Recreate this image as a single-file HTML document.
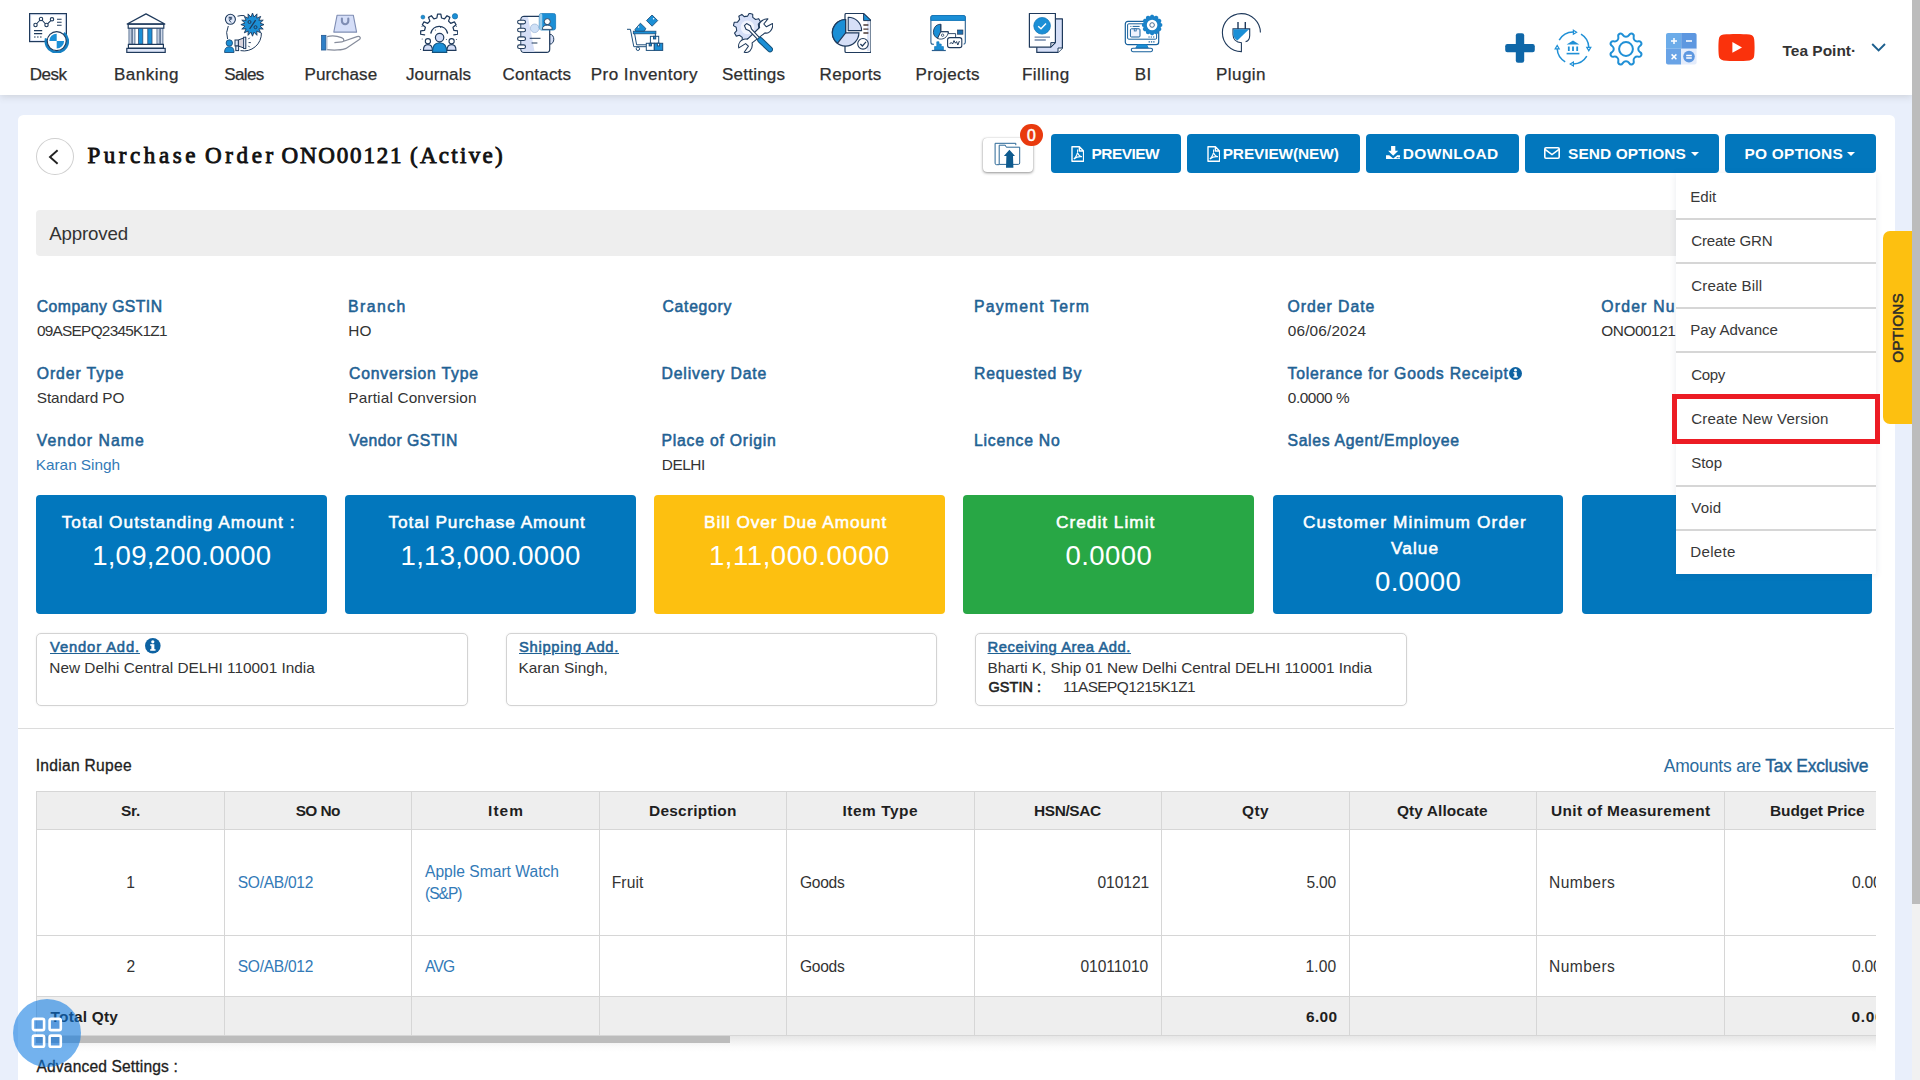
<!DOCTYPE html>
<html>
<head>
<meta charset="utf-8">
<title>Purchase Order ONO00121</title>
<style>
*{box-sizing:border-box;margin:0;padding:0}
html,body{width:1920px;height:1080px;overflow:hidden}
body{background:#e9effb;font-family:"Liberation Sans",sans-serif;color:#333;position:relative}
#root{position:absolute;left:0;top:0;width:1920px;height:1080px;overflow:hidden;background:#e9effb}
.abs{position:absolute}
.t{position:absolute;white-space:nowrap}
#nav{position:absolute;left:0;top:0;width:1912px;height:95px;background:#fff;box-shadow:0 2px 7px rgba(75,75,70,.17)}
.ni{position:absolute;top:13px;width:40px;height:40px}
</style>
</head>
<body>
<div id="root">
<div id="nav">

<svg class="ni" style="left:29px" viewBox="0 0 40 40">
<rect x=".6" y=".6" width="36.8" height="28" fill="#e1e9fa" stroke="#1f3a5c" stroke-width="1.2"/>
<rect x="2.2" y="2.2" width="33.6" height="24.8" fill="#fff"/>
<path d="M6.5 12 L12 6 L17.5 12 L23 6.3" fill="none" stroke="#1f3a5c" stroke-width="1.1"/>
<g fill="#fff" stroke="#1f3a5c" stroke-width="1.1"><circle cx="6.5" cy="12" r="1.7"/><circle cx="12" cy="6" r="1.7"/><circle cx="17.5" cy="12" r="1.7"/><circle cx="23" cy="6.3" r="1.7"/></g>
<path d="M28 6.2 H32.6 M28 9.2 H32.6 M28 12.2 H32.6 M5 17.6 H13.2 M5 20.6 H13.2" stroke="#1f3a5c" stroke-width="1.1"/>
<path d="M5 24 H13.2" stroke="#1f3a5c" stroke-width="1.1" stroke-dasharray="1.6 1.4"/>
<path d="M34.81 19.95 A10.9 10.9 0 1 1 17.27 25.48" fill="none" stroke="#1580c2" stroke-width="2.8"/>
<circle cx="27.7" cy="28.1" r="9.5" fill="#fff" stroke="#1f3a5c" stroke-width="1.1"/>
<path d="M27.7 28.1 V20.7 A7.4 7.4 0 0 0 20.3 28.1 Z M27.7 28.1 V35.5 A7.4 7.4 0 0 0 35.1 28.1 Z" fill="#1b8fd6"/>
</svg>
<svg class="ni" style="left:125.9px" viewBox="0 0 40 40">
<path d="M20 .9 L1.2 11 H38.8 Z" fill="#fff" stroke="#1f3a5c" stroke-width="1.3" stroke-linejoin="round"/>
<rect x="2.2" y="11.3" width="35.6" height="3.9" fill="#fff" stroke="#1f3a5c" stroke-width="1.2"/>
<g stroke="#2c4a72" stroke-width=".8"><rect x="3" y="15.5" width="2.2" height="15.7" fill="#e4ebfa"/><rect x="6.7" y="15.5" width="2.2" height="15.7" fill="#e4ebfa"/>
<rect x="12.6" y="15.5" width="4.2" height="15.7" fill="#1b8fd6"/><rect x="21.8" y="15.5" width="4.2" height="15.7" fill="#1b8fd6"/>
<rect x="31" y="15.5" width="2.2" height="15.7" fill="#e4ebfa"/><rect x="34.7" y="15.5" width="2.2" height="15.7" fill="#e4ebfa"/></g>
<rect x="2.4" y="31.4" width="35" height="3.8" fill="#fff" stroke="#1f3a5c" stroke-width="1.2"/>
<rect x=".8" y="35.4" width="38.4" height="4" fill="#dfe7f9" stroke="#1f3a5c" stroke-width="1.2"/>
</svg>
<svg class="ni" style="left:224px" viewBox="0 0 40 40">
<path d="M13.5 3.2 A17.5 17.5 0 0 1 20.5 2.6" fill="none" stroke="#1f3a5c" stroke-width="1"/>
<path d="M4.3 13 A17.5 17.5 0 0 0 3.6 26" fill="none" stroke="#1f3a5c" stroke-width="1"/>
<path d="M16.5 37.6 A17.5 17.5 0 0 0 37.4 19.8" fill="none" stroke="#1f3a5c" stroke-width="1"/>
<circle cx="6.4" cy="6.3" r="5" fill="#e1e9fa" stroke="#1f3a5c" stroke-width="1.1"/>
<path d="M4.6 4.3 H8.2 M4.6 5.9 H8.2 M5.4 4.3 C7.6 4.3 7.6 7.3 5 7.3 L7.4 9.6" fill="none" stroke="#1f3a5c" stroke-width=".9"/>
<polygon points="28.50,0.00 30.00,4.05 32.94,0.88 32.78,5.20 36.70,3.40 34.90,7.32 39.22,7.16 36.05,10.10 40.10,11.60 36.05,13.10 39.22,16.04 34.90,15.88 36.70,19.80 32.78,18.00 32.94,22.32 30.00,19.15 28.50,23.20 27.00,19.15 24.06,22.32 24.22,18.00 20.30,19.80 22.10,15.88 17.78,16.04 20.95,13.10 16.90,11.60 20.95,10.10 17.78,7.16 22.10,7.32 20.30,3.40 24.22,5.20 24.06,0.88 27.00,4.05" fill="#1b8fd6" stroke="#1f3a5c" stroke-width=".9" stroke-linejoin="round"/>
<path d="M31.6 7.2 L25.6 16" stroke="#1f3a5c" stroke-width="1.3"/><circle cx="25.5" cy="9" r="1.5" fill="none" stroke="#1f3a5c" stroke-width="1"/><circle cx="31.5" cy="14.2" r="1.5" fill="none" stroke="#1f3a5c" stroke-width="1"/>
<circle cx="5.3" cy="30" r="3.2" fill="#1b8fd6" stroke="#1f4f7c" stroke-width=".9"/>
<path d="M.6 39.5 C.6 35 2.5 33.8 5.3 33.8 C8.2 33.8 10 35 10 39.5 Z" fill="#1b8fd6" stroke="#1f4f7c" stroke-width=".9"/>
<rect x="11" y="27" width="3.4" height="6" fill="#e1e9fa" stroke="#1f3a5c" stroke-width="1"/>
<path d="M14.4 27 L21.6 24.2 V35.6 L14.4 33 Z" fill="#d9d3dc" stroke="#1f3a5c" stroke-width="1"/>
<rect x="19.6" y="24.2" width="2.2" height="11.4" fill="#e1e9fa" stroke="#1f3a5c" stroke-width=".9"/>
<rect x="11.8" y="33" width="2.8" height="4.6" fill="#e1e9fa" stroke="#1f3a5c" stroke-width="1"/>
<path d="M24.4 26.2 L25.6 24.8 M24.6 29.6 H26.8 M24.4 32.8 L25.6 34.2" stroke="#1f3a5c" stroke-width="1"/>
</svg>
<svg class="ni" style="left:321px" viewBox="0 0 40 40">
<path d="M16.1 2.2 H32.3 L35.6 19.1 H12.8 Z" fill="#d5def8" stroke="#7f8db3" stroke-width="1.1" stroke-linejoin="round"/>
<path d="M20.9 5.6 V8 A3.2 3.2 0 0 0 27.3 8 V5.6" fill="none" stroke="#7f8db3" stroke-width="2.1" stroke-linecap="round"/>
<rect x=".3" y="22.4" width="4.6" height="14.6" fill="#2f7fc6" stroke="#2a5f98" stroke-width=".9"/>
<path d="M6 23.6 C10 22.6 16 22.8 20.5 24.6 C23.6 25.8 23.4 28.6 21 28.8 L13.4 29.6 M20.5 29 L36 23.6 C39 22.6 40.4 25.2 38 26.8 L25 35.4 C22 37.2 12 37.4 6 36.6" fill="none" stroke="#878d9c" stroke-width="1.25"/>
<path d="M6 23.4 V36.8" stroke="#b8c0d0" stroke-width="1"/>
</svg>
<svg class="ni" style="left:418px" viewBox="0 0 40 40">
<path d="M6.58 21.92 L2.67 21.25 L2.67 17.95 L6.58 17.28 L7.38 14.30 L4.33 11.77 L5.98 8.90 L9.70 10.29 L11.89 8.10 L10.50 4.38 L13.37 2.73 L15.90 5.78 L18.88 4.98 L19.55 1.07 L22.85 1.07 L23.52 4.98 L26.50 5.78 L29.03 2.73 L31.90 4.38 L30.51 8.10 L32.70 10.29 L36.42 8.90 L38.07 11.77 L35.02 14.30 L35.82 17.28 L39.73 17.95 L39.73 21.25 L35.82 21.92" fill="none" stroke="#1f3a5c" stroke-width="1.25" stroke-linejoin="round" stroke-linecap="round"/>
<path d="M12.9 20 A8.5 8.5 0 0 1 29.5 20" fill="none" stroke="#1f3a5c" stroke-width="1.4" stroke-linecap="round"/>
<circle cx="4.9" cy="4.1" r="1.9" fill="#1b8fd6" stroke="#156fa8" stroke-width=".7"/><circle cx="37" cy="3.3" r="2.7" fill="#1b8fd6" stroke="#156fa8" stroke-width=".7"/>
<g fill="#1f3a5c"><circle cx="22.6" cy="14.6" r=".5"/><circle cx="17.4" cy="17" r=".5"/><circle cx="4.2" cy="26" r=".5"/><circle cx="38.4" cy="26.4" r=".5"/><circle cx="2.6" cy="36.6" r=".5"/><circle cx="4" cy="13.4" r=".5"/><circle cx="38.4" cy="13.2" r=".5"/><circle cx="28.4" cy="26.4" r=".5"/></g>
<circle cx="9.9" cy="28.2" r="2.6" fill="#fff" stroke="#1f3a5c" stroke-width="1.1"/>
<path d="M5.4 37.4 C5.4 33.4 7 31.6 9.9 31.6 C12.8 31.6 14.4 33.4 14.4 37.4 Z" fill="#d6dff7" stroke="#1f3a5c" stroke-width="1.1"/>
<circle cx="33.6" cy="28.2" r="2.6" fill="#fff" stroke="#1f3a5c" stroke-width="1.1"/>
<path d="M29 37.4 C29 33.4 30.6 31.6 33.6 31.6 C36.6 31.6 38 33.4 38 37.4 Z" fill="#d6dff7" stroke="#1f3a5c" stroke-width="1.1"/>
<path d="M14.4 39.4 C14.4 32.6 16.4 29.8 21.6 29.8 C26.8 29.8 28.8 32.6 28.8 39.4 Z" fill="#1b8fd6" stroke="#14527c" stroke-width="1.1"/>
<circle cx="21.6" cy="24.6" r="4.2" fill="#d6dff7" stroke="#1f3a5c" stroke-width="1.2"/>
</svg>
<svg class="ni" style="left:516.5px" viewBox="0 0 40 40">
<path d="M32.6 21.2 C38.2 21.2 38.2 31.2 32.6 31.2 Z" fill="#d6dff7" stroke="#1f3a5c" stroke-width="1"/>
<rect x="3.9" y="3.3" width="28.8" height="36.1" rx="3.2" fill="#fff" stroke="#1f3a5c" stroke-width="1.2"/>
<path d="M4.6 6 C4.6 4.6 5.6 3.9 7 3.9 H11 L17.6 38.8 H7 C5.6 38.8 4.6 38 4.6 36.6 Z" fill="#d6dff7"/>
<g fill="#fff" stroke="#1f3a5c" stroke-width="1.1"><rect x=".6" y="7.3" width="7.9" height="3.6" rx="1.8"/><rect x=".6" y="15.2" width="7.9" height="3.6" rx="1.8"/><rect x=".6" y="23.9" width="7.9" height="3.6" rx="1.8"/><rect x=".6" y="31.9" width="7.9" height="3.6" rx="1.8"/></g>
<circle cx="17.7" cy="15.3" r="4.3" fill="#cfe0f6" stroke="#8fa9cf" stroke-width=".6"/>
<path d="M12.7 25.3 H23.5 M14.6 30 H20.4" stroke="#1f3a5c" stroke-width="1"/>
<rect x="22.3" y=".4" width="16.3" height="16.6" rx="2.2" fill="#1b8fd6" stroke="#1678ba" stroke-width=".8"/>
<rect x="22.3" y=".4" width="3" height="16.6" rx="1.5" fill="#fff" opacity=".55"/>
<circle cx="30.3" cy="8.6" r="3" fill="#fff" stroke="#1f3a5c" stroke-width=".9"/>
<path d="M25.4 16.4 C25.4 13.2 27.6 12.2 30.3 12.2 C33 12.2 35.2 13.2 35.2 16.4 Z" fill="#fff" stroke="#1f3a5c" stroke-width=".8"/>
</svg>
<svg class="ni" style="left:625px" viewBox="0 0 40 40">
<path d="M2 16.3 H5.4 L8.8 33.7 H21" fill="none" stroke="#1d4f7c" stroke-width="1"/>
<path d="M9.6 20.6 L11.6 31.8 H21" fill="none" stroke="#1d4f7c" stroke-width="1"/>
<rect x="8.3" y="18.2" width="22.6" height="2.6" fill="#1b8fd6" stroke="#1d4f7c" stroke-width=".8"/>
<path d="M30.4 20.8 V23.2" stroke="#1d4f7c" stroke-width="1"/>
<circle cx="12.9" cy="35.8" r="1.7" fill="#fff" stroke="#1d4f7c" stroke-width="1"/>
<polygon points="27.1,2 32.7,7.6 27.1,13.2 21.5,7.6" fill="#1b8fd6" stroke="#1d4f7c" stroke-width=".9"/><circle cx="28.6" cy="5.8" r=".8" fill="#fff"/>
<polygon points="10,16.4 15.4,10.2 20.8,15.4 19.4,18.2 10.6,18.2" fill="#1b8fd6" stroke="#1d4f7c" stroke-width=".9"/><circle cx="13.6" cy="14" r=".8" fill="#fff"/>
<g stroke="#1d4f7c" stroke-width="1"><rect x="25.4" y="23.3" width="8.3" height="7" fill="#fff"/><rect x="21.3" y="30.3" width="8" height="7.1" fill="#fff"/><rect x="29.3" y="30.3" width="8.4" height="7.1" fill="#1b8fd6"/>
<rect x="28.5" y="23.3" width="2.2" height="2.6" fill="#1b8fd6"/><rect x="24.2" y="30.3" width="2.2" height="2.6" fill="#1b8fd6"/><rect x="32.4" y="30.3" width="2.2" height="2.6" fill="#fff"/></g>
</svg>
<svg class="ni" style="left:733px" viewBox="0 0 40 40">
<path d="M14.66 3.10 L16.26 0.31 L19.71 1.19 L19.77 4.41 L22.60 6.53 L25.71 5.68 L27.52 8.74 L25.30 11.06 L25.80 14.56 L28.59 16.16 L27.71 19.61 L24.49 19.67 L22.37 22.50 L23.22 25.61 L20.16 27.42 L17.84 25.20 L14.34 25.70 L12.74 28.49 L9.29 27.61 L9.23 24.39 L6.40 22.27 L3.29 23.12 L1.48 20.06 L3.70 17.74 L3.20 14.24 L0.41 12.64 L1.29 9.19 L4.51 9.13 L6.63 6.30 L5.78 3.19 L8.84 1.38 L11.16 3.60 Z" fill="#d6dff7" stroke="#1f3a5c" stroke-width="1.1" stroke-linejoin="round"/>
<circle cx="14.5" cy="14.4" r="6.8" fill="#f1f4fd"/>
<path d="M34.9 5.8 L30.8 11 L33.4 13.8 L39.6 10.6 C40.2 14 38.5 18 35.7 19.5 C34.5 20.1 33 20.2 32 19.9 L19.1 29.9 C19.6 33 19 36 17 37.8 C15.4 39.2 13 39.8 11.2 39.3 L15.4 33.2 L12.6 30.6 L5.8 34.9 C5 32 6.5 28.6 9.1 27 C11 26 13 25.8 14.5 26.2 L26.6 14.5 C26 12 26.4 10.6 27 9.7 C28.4 7.6 31 6 34.9 5.800 Z" fill="#fff" stroke="#1f3a5c" stroke-width="1.1" stroke-linejoin="round"/>
<path d="M11.4 12.6 L13.6 10.6 L17.4 12.8 L18.6 16.2 L27.6 25.8 L25.8 27.600 L16.4 17.8 L13 16.2 Z" fill="#fff" stroke="#1f3a5c" stroke-width="1.1" stroke-linejoin="round"/>
<path d="M27.2 27 L37 36.4" stroke="#14527c" stroke-width="6" stroke-linecap="round"/>
<path d="M27.2 27 L37 36.4" stroke="#1b8fd6" stroke-width="3.9" stroke-linecap="round"/>
</svg>
<svg class="ni" style="left:830.5px" viewBox="0 0 40 40">
<path d="M15.4 .5 H32.6 L40 7.6 V38.2 C40 39 39.4 39.5 38.6 39.5 H15.4 C14.6 39.5 14 39 14 38.2 V1.8 C14 1 14.6 .5 15.4 .5 Z" fill="#fff" stroke="#1f3a5c" stroke-width="1.2"/>
<path d="M37.4 8 V38" stroke="#dbe3f7" stroke-width="2.6"/>
<path d="M32.6 .5 L40 7.6 H32.6 Z" fill="#1b8fd6" stroke="#1f3a5c" stroke-width="1"/>
<path d="M14.6 6.5 A13.3 13.3 0 1 0 27.9 19.8 H14.6 Z" fill="#d6dff7" stroke="#1f3a5c" stroke-width="1.2"/>
<path d="M14.6 6.500 A13.3 13.3 0 0 0 6.41 30.28 L14.6 19.8 Z" fill="#1b8fd6" stroke="#1f3a5c" stroke-width="1.2" stroke-linejoin="round"/>
<path d="M17.2 17.6 V4.2 A13.4 13.4 0 0 1 30.6 17.6 Z" fill="#d6dff7" stroke="#1f3a5c" stroke-width="1.1" stroke-linejoin="round"/>
<path d="M32.4 12 H37.4 M32.4 16.1 H37.4 M32.4 20 H37.4" stroke="#4a3a36" stroke-width="1.3"/>
<circle cx="32" cy="30.8" r="5.3" fill="#fff" stroke="#1f3a5c" stroke-width="1.1"/>
<path d="M29.4 31 L31.4 33 L35 28.8" fill="none" stroke="#1f3a5c" stroke-width="1.2"/>
</svg>
<svg class="ni" style="left:928px" viewBox="0 0 40 40">
<path d="M6 31.2 H5 C3.8 31.2 2.9 30.4 2.9 29.2 V4.6 C2.9 3.4 3.8 2.5 5 2.5 H35.2 C36.4 2.5 37.3 3.4 37.3 4.6 V29.2 C37.3 30.4 36.6 31 35.6 31.2" fill="#fff" stroke="#2a5f8f" stroke-width="1.1"/>
<path d="M2.9 7.4 V4.6 C2.9 3.4 3.8 2.5 5 2.5 H35.2 C36.4 2.5 37.3 3.4 37.3 4.6 V7.4 Z" fill="#1b8fd6" stroke="#1678ba" stroke-width="1"/>
<path d="M12.8 11.2 A7.5 7.5 0 0 0 9.6 25.4 L12.8 18.7 Z" fill="#1b8fd6" stroke="#1f3a5c" stroke-width=".9"/>
<path d="M9.6 25.4 A7.5 7.5 0 0 0 20.3 18.7 H12.8 Z" fill="#fff" stroke="#1f3a5c" stroke-width=".9"/>
<path d="M12.8 11.2 V18.7 H20.3 V20.6 H27.6 V24" fill="none" stroke="#1f3a5c" stroke-width=".9"/>
<circle cx="14.6" cy="22.2" r="1.2" fill="none" stroke="#1f3a5c" stroke-width=".8"/>
<rect x="29.5" y="17" width="5.4" height="4.2" fill="#1d6fae" stroke="#1f3a5c" stroke-width=".7"/>
<path d="M6.6 37 V33.6 H8.8 V28.8 H11 V31 H13.2 V33.6 H15.4 V37 Z" fill="#1b8fd6" stroke="#1678ba" stroke-width=".7"/>
<path d="M3.8 37.5 H17.8" stroke="#2a5f8f" stroke-width="1.2"/>
<rect x="19.6" y="24.6" width="14.2" height="10" rx="2.2" fill="#fff" stroke="#1f3a5c" stroke-width="1.1"/>
<path d="M21.6 30.6 L23.4 29.6 L24.6 31 L26 27.6 L27.4 30.2 L28.6 28.6 L29.8 32 L31.4 28" fill="none" stroke="#1f3a5c" stroke-width="1"/>
</svg>
<svg class="ni" style="left:1026px" viewBox="0 0 40 40">
<path d="M10.8 5.8 H36.4 V35 L32 39.4 H10.8 Z" fill="#d6dff7" stroke="#1f3a5c" stroke-width="1.2" stroke-linejoin="round"/>
<path d="M36.4 35 H32 V39.4" fill="#fff" stroke="#1f3a5c" stroke-width="1"/>
<path d="M3.4 .5 H29.4 V29.6 L24.8 34.2 H3.4 Z" fill="#fff" stroke="#1f3a5c" stroke-width="1.2" stroke-linejoin="round"/>
<path d="M29.4 29.6 H24.8 V34.2 Z" fill="#c9d0dc" stroke="#1f3a5c" stroke-width="1" stroke-linejoin="round"/>
<circle cx="16.1" cy="12.8" r="8.3" fill="#1b8fd6" stroke="#1678ba" stroke-width=".8"/>
<path d="M12.2 13.2 L15 15.8 L20 10.4" fill="none" stroke="#fff" stroke-width="1.4"/>
<path d="M8.6 24.1 H24 M8.6 27 H19.8" stroke="#6f87a8" stroke-width="1.3"/>
</svg>
<svg class="ni" style="left:1123px" viewBox="0 0 40 40">
<rect x="2.3" y="8.3" width="33.4" height="23.3" rx="2.6" fill="#fff" stroke="#17609c" stroke-width="1.2"/>
<rect x="4.6" y="10.8" width="29" height="15.4" rx="1.2" fill="#fff" stroke="#17609c" stroke-width="1"/>
<path d="M7.4 13.4 H16.6" stroke="#17609c" stroke-width="1" stroke-dasharray="1 1.2 20"/>
<rect x="7.4" y="15.8" width="9.6" height="8.2" rx="1" fill="#eef2fd" stroke="#17609c" stroke-width="1"/>
<rect x="11.2" y="15.8" width="2" height="2.2" fill="#cfd9f3" stroke="#17609c" stroke-width=".7"/>
<path d="M25.4 24 H31.4 M25.6 28.8 H31.6" stroke="#17609c" stroke-width="1.2" stroke-dasharray="1.3 1"/>
<path d="M14.6 31.6 H23.6 L25.2 35 H12.8 Z" fill="#1b8fd6" stroke="#1678ba" stroke-width=".8"/>
<rect x="8.3" y="35.2" width="21.2" height="3.5" rx="1.6" fill="#fff" stroke="#17609c" stroke-width="1.1"/>
<path d="M27.80 3.80 L28.31 2.63 L29.89 2.63 L30.40 3.80 L32.07 4.25 L33.10 3.49 L34.46 4.28 L34.32 5.55 L35.55 6.78 L36.82 6.64 L37.61 8.00 L36.85 9.03 L37.30 10.70 L38.47 11.21 L38.47 12.79 L37.30 13.30 L36.85 14.97 L37.61 16.00 L36.82 17.36 L35.55 17.22 L34.32 18.45 L34.46 19.72 L33.10 20.51 L32.07 19.75 L30.40 20.20 L29.89 21.37 L28.31 21.37 L27.80 20.20 L26.13 19.75 L25.10 20.51 L23.74 19.72 L23.88 18.45 L22.65 17.22 L21.38 17.36 L20.59 16.00 L21.35 14.97 L20.90 13.30 L19.73 12.79 L19.73 11.21 L20.90 10.70 L21.35 9.03 L20.59 8.00 L21.38 6.64 L22.65 6.78 L23.88 5.55 L23.74 4.28 L25.10 3.49 L26.13 4.25 Z" fill="#1b83c9" stroke="#1b83c9" stroke-width="1.6" stroke-linejoin="round"/>
<circle cx="29.1" cy="12" r="5.3" fill="#fff"/>
<circle cx="29.1" cy="12" r="2.3" fill="#fff" stroke="#3a5f86" stroke-width=".9"/>
</svg>
<svg class="ni" style="left:1221px" viewBox="0 0 40 40">
<path d="M39.4 19.4 A19 19 0 1 0 20.4 38.6 V29.8 C15 29.4 12 26 12 21.6 V15.9 H28.7 V22.4 C28.7 26 27 28 24.6 28.6" fill="none" stroke="#1f3a5c" stroke-width="1.1"/>
<path d="M12.4 16.3 H28 L16.4 27.6 C13.6 26 12.4 24 12.4 21.6 Z" fill="#1b8fd6"/>
<path d="M17 9 V16 M24.3 9 V16" stroke="#1f3a5c" stroke-width="1.4"/>
</svg>
  
<svg class="abs" style="left:1505px;top:33px" width="30" height="30" viewBox="0 0 30 30"><rect x="10.8" y=".2" width="8.4" height="29.6" rx="2.2" fill="#0f67a8"/><rect x=".2" y="11" width="29.6" height="8.2" rx="2.2" fill="#0f67a8"/></svg>
<svg class="abs" style="left:1553.3px;top:28.3px" width="40" height="40" viewBox="0 0 40 40" fill="none" stroke="#2090d6" stroke-width="1.5">
<path d="M6.2 12.2 A16 16 0 0 1 20.4 4"/><path d="M20.4 2.2 L23.6 4.2 L20.4 6.2 Z" fill="#fff" stroke-width="1.2"/>
<path d="M28 6.200 A16 16 0 0 1 35.8 19.4"/><path d="M33.8 19.400 L35.8 22.8 L37.800 19.4 Z" fill="#fff" stroke-width="1.2"/>
<path d="M33.8 28.200 A16 16 0 0 1 20.4 36"/><path d="M20.4 34 L17.2 36 L20.4 38 Z" fill="#fff" stroke-width="1.2"/>
<path d="M12.2 33.8 A16 16 0 0 1 4.2 20.8"/><path d="M2.2 20.800 L4.200 17.4 L6.2 20.8 Z" fill="#fff" stroke-width="1.2"/>
<path d="M20 12.4 L13.6 16.6 H26.4 Z" fill="#2090d6" stroke="none"/>
<path d="M15.800 18.6 V23 M20 18.6 V23 M24.2 18.600 V23" stroke-width="1.8"/>
<rect x="13.6" y="24.8" width="12.8" height="1.6" fill="#2090d6" stroke="none"/>
</svg>
<svg class="abs" style="left:1606px;top:29px" width="40" height="40" viewBox="0 0 40 40" fill="none" stroke="#2090d6" stroke-width="2">
<path d="M20.00 7.75 Q21.94 7.75 23.04 6.15 L23.40 5.63 Q24.51 4.02 26.31 4.77 L26.31 4.77 Q28.11 5.52 27.76 7.44 L27.64 8.06 Q27.29 9.97 28.66 11.34 L28.66 11.34 Q30.03 12.71 31.94 12.36 L32.56 12.24 Q34.48 11.89 35.23 13.69 L35.23 13.69 Q35.98 15.49 34.37 16.60 L33.85 16.96 Q32.25 18.06 32.25 20.00 L32.25 20.00 Q32.25 21.94 33.85 23.04 L34.37 23.40 Q35.98 24.51 35.23 26.31 L35.23 26.31 Q34.48 28.11 32.56 27.76 L31.94 27.64 Q30.03 27.29 28.66 28.66 L28.66 28.66 Q27.29 30.03 27.64 31.94 L27.76 32.56 Q28.11 34.48 26.31 35.23 L26.31 35.23 Q24.51 35.98 23.40 34.37 L23.04 33.85 Q21.94 32.25 20.00 32.25 L20.00 32.25 Q18.06 32.25 16.96 33.85 L16.60 34.37 Q15.49 35.98 13.69 35.23 L13.69 35.23 Q11.89 34.48 12.24 32.56 L12.36 31.94 Q12.71 30.03 11.34 28.66 L11.34 28.66 Q9.97 27.29 8.06 27.64 L7.44 27.76 Q5.52 28.11 4.77 26.31 L4.77 26.31 Q4.02 24.51 5.63 23.40 L6.15 23.04 Q7.75 21.94 7.75 20.00 L7.75 20.00 Q7.75 18.06 6.15 16.96 L5.63 16.60 Q4.02 15.49 4.77 13.69 L4.77 13.69 Q5.52 11.89 7.44 12.24 L8.06 12.36 Q9.97 12.71 11.34 11.34 L11.34 11.34 Q12.71 9.97 12.36 8.06 L12.24 7.44 Q11.89 5.52 13.69 4.77 L13.69 4.77 Q15.49 4.02 16.60 5.63 L16.96 6.15 Q18.06 7.75 20.00 7.75 Z" stroke-linejoin="round"/>
<circle cx="20" cy="20" r="6.9"/>
</svg>
<svg class="abs" style="left:1666px;top:33px" width="31" height="32" viewBox="0 0 31 32">
<path d="M2 0 H15.2 V15.8 H0 V2 C0 .9 .9 0 2 0 Z" fill="#6cace9"/>
<path d="M15.2 0 H28.6 C29.7 0 30.6 .9 30.6 2 V15.8 H15.2 Z" fill="#5d97e0"/>
<path d="M0 15.8 H15.2 V31.6 H2 C.9 31.6 0 30.7 0 29.6 Z" fill="#69a3e6"/>
<path d="M15.2 15.8 H30.6 V29.6 C30.6 30.7 29.7 31.6 28.6 31.6 H15.2 Z" fill="#e4ecfb"/>
<circle cx="23" cy="23.6" r="5.8" fill="#5d97e0"/>
<path d="M5 8 H11 M8 5 V11 M20 8 H26 M5.6 21.4 L10.4 26.2 M10.4 21.4 L5.6 26.2 M20.2 22.4 H25.8 M20.2 25 H25.8" stroke="#fff" stroke-width="1.5"/>
</svg>
<svg class="abs" style="left:1718px;top:34px" width="37" height="27" viewBox="0 0 37 27"><path d="M5.5 .6 C13 -.2 24 -.2 31.5 .6 C34.4 .9 36 2.6 36.2 5.4 C36.7 10 36.7 17 36.2 21.6 C36 24.4 34.4 26.1 31.5 26.4 C24 27.2 13 27.2 5.5 26.4 C2.6 26.1 1 24.4 .8 21.6 C.3 17 .3 10 .8 5.4 C1 2.6 2.6 .9 5.500 .6 Z" fill="#fa320c"/><path d="M14.4 7.9 L24 13.4 L14.4 18.8 Z" fill="#fff"/></svg>
<svg class="abs" style="left:1870px;top:41px" width="17" height="12" viewBox="0 0 17 12"><path d="M2.2 3 L8.6 9.4 L15 3" fill="none" stroke="#1c5f8e" stroke-width="1.9"/></svg>

  
</div>
<div class="abs" style="left:18px;top:115px;width:1876.7px;height:965px;background:#fff;border-radius:5.5px 5.5px 0 0"></div>
<div class="abs" style="left:36px;top:138px;width:37.6px;height:37px;border:1px solid #d0d0d0;border-radius:50%;background:#fff"></div>
<svg class="abs" style="left:36px;top:138px" width="37" height="37" viewBox="0 0 37 37"><path d="M21.6 12.2 L14 19 L21.6 25.8" fill="none" stroke="#222" stroke-width="1.9"/></svg>

<div class="abs" style="left:983px;top:138.4px;width:50px;height:33.4px;background:#fff;border-radius:4px;box-shadow:0 1px 3px rgba(0,0,0,.42),0 0 1px rgba(0,0,0,.25)"></div>
<svg class="abs" style="left:990px;top:140px" width="34" height="30" viewBox="0 0 34 30">
  <path d="M25.8 5.2 V3.3 H5.1 V23.2 Q5.1 24.7 6.6 24.7 H9.2" fill="none" stroke="#2a6796" stroke-width="1"/>
  <path d="M9.2 5.2 H15.3 L16.3 7.2 H29.7 V23 Q29.7 24.4 28.3 24.4 H9.2 Z" fill="#fff" stroke="#2a6796" stroke-width="1"/>
  <path d="M19.4 9.7 L25 16 H23 L23.4 27.7 H16 L16.4 16 H13.9 Z" fill="#0d5a8e"/>
</svg>
<div class="abs" style="left:1020.1px;top:123.7px;width:22.6px;height:22.6px;border-radius:50%;background:#e93a0e"></div>
<div class="abs" style="left:1051.2px;top:134.2px;width:129.5999999999999px;height:38.5px;background:#0277bd;border-radius:4px"></div><div class="abs" style="left:1187px;top:134.2px;width:173px;height:38.5px;background:#0277bd;border-radius:4px"></div><div class="abs" style="left:1366.2px;top:134.2px;width:152.5999999999999px;height:38.5px;background:#0277bd;border-radius:4px"></div><div class="abs" style="left:1525.2px;top:134.2px;width:193.5999999999999px;height:38.5px;background:#0277bd;border-radius:4px"></div><div class="abs" style="left:1725px;top:134.2px;width:151.20000000000005px;height:38.5px;background:#0277bd;border-radius:4px"></div>
<svg class="abs" style="left:1070.7px;top:145.9px" width="13.6" height="16" viewBox="0 0 13.6 16"><path d="M1 .8 H8.4 L12.6 5 V15.2 H1 Z M8.4 .8 V5 H12.6" fill="none" stroke="#fff" stroke-width="1.4" stroke-linejoin="round"/><path d="M2.8 13 C5.2 11 7.2 6.6 6.6 3.6 C6.2 7 8 10 11 10.8 C8 10.2 5 11.4 2.800 13" fill="none" stroke="#fff" stroke-width="1.1"/></svg>
<svg class="abs" style="left:1206.9px;top:145.9px" width="13.6" height="16" viewBox="0 0 13.6 16"><path d="M1 .8 H8.4 L12.6 5 V15.2 H1 Z M8.4 .8 V5 H12.6" fill="none" stroke="#fff" stroke-width="1.4" stroke-linejoin="round"/><path d="M2.8 13 C5.2 11 7.2 6.6 6.6 3.6 C6.2 7 8 10 11 10.8 C8 10.2 5 11.4 2.800 13" fill="none" stroke="#fff" stroke-width="1.1"/></svg>
<svg class="abs" style="left:1385.8px;top:145.6px" width="14.4" height="13.4" viewBox="0 0 15 14"><path d="M5.3 0 H9.7 V5 H12.8 L7.5 10.3 L2.2 5 H5.3 Z" fill="#fff"/><path d="M0 9.600 H3.3 L7.5 13 L11.7 9.6 H15 V14 H0 Z" fill="#fff"/><rect x="11.2" y="11.6" width="1.2" height="1.2" fill="#0277bd"/><rect x="13" y="11.6" width="1.2" height="1.2" fill="#0277bd"/></svg>
<svg class="abs" style="left:1544.4px;top:147.2px" width="16" height="12" viewBox="0 0 16 12"><rect x=".8" y=".8" width="14.4" height="10.4" rx="1.2" fill="none" stroke="#fff" stroke-width="1.6"/><path d="M1 2.4 L8 7.6 L15 2.4" fill="none" stroke="#fff" stroke-width="1.6"/></svg>
<div class="abs" style="left:1690.5px;top:151.6px;width:0;height:0;border-left:4.5px solid transparent;border-right:4.5px solid transparent;border-top:4.5px solid #fff"></div>
<div class="abs" style="left:1847.3px;top:151.6px;width:0;height:0;border-left:4.5px solid transparent;border-right:4.5px solid transparent;border-top:4.5px solid #fff"></div>

<div class="abs" style="left:36px;top:210px;width:1840px;height:45.8px;background:#eeeeee;border-radius:4px"></div>
<svg class="abs" style="left:1509.2px;top:367.4px" width="13" height="13" viewBox="0 0 13 13"><circle cx="6.5" cy="6.5" r="6.5" fill="#0d62a2"/><rect x="5.3" y="5.2" width="2.5" height="5" fill="#fff"/><rect x="4.3" y="9.3" width="4.5" height="1.3" fill="#fff"/><rect x="4.3" y="5.2" width="2" height="1.2" fill="#fff"/><circle cx="6.5" cy="3.2" r="1.35" fill="#fff"/></svg>
<div class="abs" style="left:36.2px;top:495px;width:290.8px;height:118.6px;background:#0277bd;border-radius:4px"></div>
<div class="abs" style="left:345px;top:495px;width:291.0px;height:118.6px;background:#0277bd;border-radius:4px"></div>
<div class="abs" style="left:654px;top:495px;width:291.0px;height:118.6px;background:#fdc010;border-radius:4px"></div>
<div class="abs" style="left:962.6px;top:495px;width:291.4px;height:118.6px;background:#28a745;border-radius:4px"></div>
<div class="abs" style="left:1273px;top:495px;width:290.0px;height:118.6px;background:#0277bd;border-radius:4px"></div>
<div class="abs" style="left:1582px;top:495px;width:290.0px;height:118.6px;background:#0277bd;border-radius:4px"></div>

<div class="abs" style="left:36px;top:633px;width:431.5px;height:73px;border:1px solid #d3d3d3;border-radius:5px;background:#fff;box-shadow:0 0 2px rgba(0,0,0,.08)"></div>
<div class="abs" style="left:506px;top:633px;width:430.8px;height:73px;border:1px solid #d3d3d3;border-radius:5px;background:#fff;box-shadow:0 0 2px rgba(0,0,0,.08)"></div>
<div class="abs" style="left:975.2px;top:633px;width:431.4px;height:73px;border:1px solid #d3d3d3;border-radius:5px;background:#fff;box-shadow:0 0 2px rgba(0,0,0,.08)"></div>
<svg class="abs" style="left:145px;top:638px" width="15.6" height="15.6" viewBox="0 0 13 13"><circle cx="6.5" cy="6.5" r="6.5" fill="#0d62a2"/><rect x="5.3" y="5.2" width="2.5" height="5" fill="#fff"/><rect x="4.3" y="9.3" width="4.5" height="1.3" fill="#fff"/><rect x="4.3" y="5.2" width="2" height="1.2" fill="#fff"/><circle cx="6.5" cy="3.2" r="1.35" fill="#fff"/></svg>
<div class="abs" style="left:18px;top:728px;width:1876px;height:1px;background:#dcdcdc"></div>
<div class="t" style="left:29.70px;top:63px;height:23px;line-height:23px;font-size:17.06px;color:#2e2e2e;letter-spacing:-0.472px;-webkit-text-stroke:0.25px #2e2e2e;">Desk</div>
<div class="t" style="left:114.00px;top:63px;height:23px;line-height:23px;font-size:17.06px;color:#2e2e2e;letter-spacing:0.480px;-webkit-text-stroke:0.25px #2e2e2e;">Banking</div>
<div class="t" style="left:224.25px;top:63px;height:23px;line-height:23px;font-size:17.06px;color:#2e2e2e;letter-spacing:-0.655px;-webkit-text-stroke:0.25px #2e2e2e;">Sales</div>
<div class="t" style="left:304.50px;top:63px;height:23px;line-height:23px;font-size:17.06px;color:#2e2e2e;letter-spacing:0.102px;-webkit-text-stroke:0.25px #2e2e2e;">Purchase</div>
<div class="t" style="left:406.00px;top:63px;height:23px;line-height:23px;font-size:17.06px;color:#2e2e2e;letter-spacing:0.084px;-webkit-text-stroke:0.25px #2e2e2e;">Journals</div>
<div class="t" style="left:502.50px;top:63px;height:23px;line-height:23px;font-size:17.06px;color:#2e2e2e;letter-spacing:0.179px;-webkit-text-stroke:0.25px #2e2e2e;">Contacts</div>
<div class="t" style="left:590.75px;top:63px;height:23px;line-height:23px;font-size:17.06px;color:#2e2e2e;letter-spacing:0.449px;-webkit-text-stroke:0.25px #2e2e2e;">Pro Inventory</div>
<div class="t" style="left:722.00px;top:63px;height:23px;line-height:23px;font-size:17.06px;color:#2e2e2e;letter-spacing:0.204px;-webkit-text-stroke:0.25px #2e2e2e;">Settings</div>
<div class="t" style="left:819.50px;top:63px;height:23px;line-height:23px;font-size:17.06px;color:#2e2e2e;letter-spacing:0.347px;-webkit-text-stroke:0.25px #2e2e2e;">Reports</div>
<div class="t" style="left:915.50px;top:63px;height:23px;line-height:23px;font-size:17.06px;color:#2e2e2e;letter-spacing:0.349px;-webkit-text-stroke:0.25px #2e2e2e;">Projects</div>
<div class="t" style="left:1022.00px;top:63px;height:23px;line-height:23px;font-size:17.06px;color:#2e2e2e;letter-spacing:0.451px;-webkit-text-stroke:0.25px #2e2e2e;">Filling</div>
<div class="t" style="left:1134.75px;top:63px;height:23px;line-height:23px;font-size:17.06px;color:#2e2e2e;letter-spacing:0.380px;-webkit-text-stroke:0.25px #2e2e2e;">BI</div>
<div class="t" style="left:1216.00px;top:63px;height:23px;line-height:23px;font-size:17.06px;color:#2e2e2e;letter-spacing:0.419px;-webkit-text-stroke:0.25px #2e2e2e;">Plugin</div>
<div class="t" style="left:1782.50px;top:40px;height:21px;line-height:21px;font-size:15.45px;color:#333;letter-spacing:0.019px;font-weight:bold;">Tea Point·</div>
<div class="t" style="left:87.40px;top:140px;height:30px;line-height:30px;font-size:23.05px;color:#111;letter-spacing:3.548px;font-family:'Liberation Serif',serif;-webkit-text-stroke:0.85px #111;">Purchase</div>
<div class="t" style="left:204.90px;top:140px;height:30px;line-height:30px;font-size:23.05px;color:#111;letter-spacing:3.657px;font-family:'Liberation Serif',serif;-webkit-text-stroke:0.85px #111;">Order</div>
<div class="t" style="left:281.50px;top:140px;height:30px;line-height:30px;font-size:23.05px;color:#111;letter-spacing:1.782px;font-family:'Liberation Serif',serif;-webkit-text-stroke:0.85px #111;">ONO00121</div>
<div class="t" style="left:410.00px;top:140px;height:30px;line-height:30px;font-size:23.05px;color:#111;letter-spacing:2.256px;font-family:'Liberation Serif',serif;-webkit-text-stroke:0.85px #111;">(Active)</div>
<div class="t" style="left:49.30px;top:221px;height:25px;line-height:25px;font-size:18.72px;color:#333;letter-spacing:-0.180px;">Approved</div>
<div class="t" style="left:1091.50px;top:143px;height:21px;line-height:21px;font-size:15.45px;color:#fff;letter-spacing:-0.521px;font-weight:bold;">PREVIEW</div>
<div class="t" style="left:1222.70px;top:143px;height:21px;line-height:21px;font-size:15.45px;color:#fff;letter-spacing:-0.123px;font-weight:bold;">PREVIEW(NEW)</div>
<div class="t" style="left:1402.70px;top:143px;height:21px;line-height:21px;font-size:15.45px;color:#fff;letter-spacing:0.406px;font-weight:bold;">DOWNLOAD</div>
<div class="t" style="left:1568.00px;top:143px;height:21px;line-height:21px;font-size:15.45px;color:#fff;letter-spacing:0.104px;font-weight:bold;">SEND OPTIONS</div>
<div class="t" style="left:1744.50px;top:143px;height:21px;line-height:21px;font-size:15.45px;color:#fff;letter-spacing:0.247px;font-weight:bold;">PO OPTIONS</div>
<div class="t" style="left:1027.10px;top:125px;height:21px;line-height:21px;font-size:15.81px;color:#fff;letter-spacing:0.000px;-webkit-text-stroke:0.5px #fff;">0</div>
<div class="t" style="left:36.80px;top:296px;height:21px;line-height:21px;font-size:15.76px;color:#1f6294;letter-spacing:0.447px;-webkit-text-stroke:0.55px #1f6294;">Company GSTIN</div>
<div class="t" style="left:348.00px;top:296px;height:21px;line-height:21px;font-size:15.76px;color:#1f6294;letter-spacing:1.471px;-webkit-text-stroke:0.55px #1f6294;">Branch</div>
<div class="t" style="left:662.50px;top:296px;height:21px;line-height:21px;font-size:15.76px;color:#1f6294;letter-spacing:0.710px;-webkit-text-stroke:0.55px #1f6294;">Category</div>
<div class="t" style="left:974.00px;top:296px;height:21px;line-height:21px;font-size:15.76px;color:#1f6294;letter-spacing:1.236px;-webkit-text-stroke:0.55px #1f6294;">Payment Term</div>
<div class="t" style="left:1287.50px;top:296px;height:21px;line-height:21px;font-size:15.76px;color:#1f6294;letter-spacing:0.984px;-webkit-text-stroke:0.55px #1f6294;">Order Date</div>
<div class="t" style="left:1601.25px;top:296px;height:21px;line-height:21px;font-size:15.76px;color:#1f6294;letter-spacing:1.213px;-webkit-text-stroke:0.55px #1f6294;">Order Number</div>
<div class="t" style="left:36.80px;top:363px;height:21px;line-height:21px;font-size:15.76px;color:#1f6294;letter-spacing:0.909px;-webkit-text-stroke:0.55px #1f6294;">Order Type</div>
<div class="t" style="left:349.00px;top:363px;height:21px;line-height:21px;font-size:15.76px;color:#1f6294;letter-spacing:0.791px;-webkit-text-stroke:0.55px #1f6294;">Conversion Type</div>
<div class="t" style="left:661.50px;top:363px;height:21px;line-height:21px;font-size:15.76px;color:#1f6294;letter-spacing:0.852px;-webkit-text-stroke:0.55px #1f6294;">Delivery Date</div>
<div class="t" style="left:974.00px;top:363px;height:21px;line-height:21px;font-size:15.76px;color:#1f6294;letter-spacing:0.767px;-webkit-text-stroke:0.55px #1f6294;">Requested By</div>
<div class="t" style="left:1287.50px;top:363px;height:21px;line-height:21px;font-size:15.76px;color:#1f6294;letter-spacing:0.799px;-webkit-text-stroke:0.55px #1f6294;">Tolerance for Goods Receipt</div>
<div class="t" style="left:36.80px;top:430px;height:21px;line-height:21px;font-size:15.76px;color:#1f6294;letter-spacing:1.065px;-webkit-text-stroke:0.55px #1f6294;">Vendor Name</div>
<div class="t" style="left:349.00px;top:430px;height:21px;line-height:21px;font-size:15.76px;color:#1f6294;letter-spacing:0.541px;-webkit-text-stroke:0.55px #1f6294;">Vendor GSTIN</div>
<div class="t" style="left:661.50px;top:430px;height:21px;line-height:21px;font-size:15.76px;color:#1f6294;letter-spacing:0.783px;-webkit-text-stroke:0.55px #1f6294;">Place of Origin</div>
<div class="t" style="left:974.00px;top:430px;height:21px;line-height:21px;font-size:15.76px;color:#1f6294;letter-spacing:0.774px;-webkit-text-stroke:0.55px #1f6294;">Licence No</div>
<div class="t" style="left:1287.50px;top:430px;height:21px;line-height:21px;font-size:15.76px;color:#1f6294;letter-spacing:0.680px;-webkit-text-stroke:0.55px #1f6294;">Sales Agent/Employee</div>
<div class="t" style="left:37.00px;top:320px;height:21px;line-height:21px;font-size:15.39px;color:#333;letter-spacing:-0.749px;">09ASEPQ2345K1Z1</div>
<div class="t" style="left:348.30px;top:320px;height:21px;line-height:21px;font-size:15.39px;color:#333;letter-spacing:0.097px;">HO</div>
<div class="t" style="left:1287.80px;top:320px;height:21px;line-height:21px;font-size:15.39px;color:#333;letter-spacing:0.145px;">06/06/2024</div>
<div class="t" style="left:1601.25px;top:320px;height:21px;line-height:21px;font-size:15.39px;color:#333;letter-spacing:-0.454px;">ONO00121</div>
<div class="t" style="left:36.80px;top:387px;height:21px;line-height:21px;font-size:15.39px;color:#333;letter-spacing:-0.123px;">Standard PO</div>
<div class="t" style="left:348.30px;top:387px;height:21px;line-height:21px;font-size:15.39px;color:#333;letter-spacing:0.155px;">Partial Conversion</div>
<div class="t" style="left:1287.80px;top:387px;height:21px;line-height:21px;font-size:15.39px;color:#333;letter-spacing:-0.443px;">0.0000 %</div>
<div class="t" style="left:35.80px;top:454px;height:21px;line-height:21px;font-size:15.39px;color:#337ab7;letter-spacing:-0.037px;">Karan Singh</div>
<div class="t" style="left:661.80px;top:454px;height:21px;line-height:21px;font-size:15.39px;color:#333;letter-spacing:-0.453px;">DELHI</div>
<div class="t" style="left:61.70px;top:511px;height:23px;line-height:23px;font-size:17.24px;color:#fff;letter-spacing:1.036px;-webkit-text-stroke:0.55px #fff;">Total Outstanding Amount :</div>
<div class="t" style="left:388.50px;top:511px;height:23px;line-height:23px;font-size:17.24px;color:#fff;letter-spacing:0.955px;-webkit-text-stroke:0.55px #fff;">Total Purchase Amount</div>
<div class="t" style="left:704.00px;top:511px;height:23px;line-height:23px;font-size:17.24px;color:#fff;letter-spacing:0.925px;-webkit-text-stroke:0.55px #fff;">Bill Over Due Amount</div>
<div class="t" style="left:1056.00px;top:511px;height:23px;line-height:23px;font-size:17.24px;color:#fff;letter-spacing:1.013px;-webkit-text-stroke:0.55px #fff;">Credit Limit</div>
<div class="t" style="left:1303.00px;top:511px;height:23px;line-height:23px;font-size:17.24px;color:#fff;letter-spacing:1.167px;-webkit-text-stroke:0.55px #fff;">Customer Minimum Order</div>
<div class="t" style="left:1391.00px;top:537px;height:23px;line-height:23px;font-size:17.24px;color:#fff;letter-spacing:1.071px;-webkit-text-stroke:0.55px #fff;">Value</div>
<div class="t" style="left:92.20px;top:538px;height:36px;line-height:36px;font-size:27.56px;color:#fff;letter-spacing:0.230px;">1,09,200.0000</div>
<div class="t" style="left:400.50px;top:538px;height:36px;line-height:36px;font-size:27.56px;color:#fff;letter-spacing:0.305px;">1,13,000.0000</div>
<div class="t" style="left:709.00px;top:538px;height:36px;line-height:36px;font-size:27.56px;color:#fff;letter-spacing:0.517px;">1,11,000.0000</div>
<div class="t" style="left:1065.50px;top:538px;height:36px;line-height:36px;font-size:27.56px;color:#fff;letter-spacing:0.413px;">0.0000</div>
<div class="t" style="left:1375.00px;top:564px;height:36px;line-height:36px;font-size:27.56px;color:#fff;letter-spacing:0.313px;">0.0000</div>
<div class="t" style="left:50.00px;top:637px;height:20px;line-height:20px;font-size:14.78px;color:#1f6294;letter-spacing:0.863px;-webkit-text-stroke:0.55px #1f6294;text-decoration:underline;text-decoration-thickness:1px;text-underline-offset:.6px;">Vendor Add.</div>
<div class="t" style="left:519.00px;top:637px;height:20px;line-height:20px;font-size:14.78px;color:#1f6294;letter-spacing:0.680px;-webkit-text-stroke:0.55px #1f6294;text-decoration:underline;text-decoration-thickness:1px;text-underline-offset:.6px;">Shipping Add.</div>
<div class="t" style="left:987.50px;top:637px;height:20px;line-height:20px;font-size:14.78px;color:#1f6294;letter-spacing:0.555px;-webkit-text-stroke:0.55px #1f6294;text-decoration:underline;text-decoration-thickness:1px;text-underline-offset:.6px;">Receiving Area Add.</div>
<div class="t" style="left:49.30px;top:657px;height:21px;line-height:21px;font-size:15.39px;color:#333;letter-spacing:0.001px;">New Delhi Central DELHI 110001 India</div>
<div class="t" style="left:518.50px;top:657px;height:21px;line-height:21px;font-size:15.39px;color:#333;letter-spacing:0.034px;">Karan Singh,</div>
<div class="t" style="left:987.50px;top:657px;height:21px;line-height:21px;font-size:15.39px;color:#333;letter-spacing:-0.011px;">Bharti K, Ship 01 New Delhi Central DELHI 110001 India</div>
<div class="t" style="left:1063.00px;top:676px;height:21px;line-height:21px;font-size:15.39px;color:#333;letter-spacing:-0.524px;">11ASEPQ1215K1Z1</div>
<div class="t" style="left:988.50px;top:678px;height:19px;line-height:19px;font-size:14.48px;color:#222;letter-spacing:0.045px;-webkit-text-stroke:0.55px #222;">GSTIN :</div>
<div class="t" style="left:35.70px;top:755px;height:21px;line-height:21px;font-size:15.6px;color:#222;letter-spacing:0.291px;-webkit-text-stroke:0.3px #222;">Indian Rupee</div>
<div class="t" style="left:1663.70px;top:755px;height:23px;line-height:23px;font-size:17.47px;color:#2a6a9c;letter-spacing:-0.154px;">Amounts are</div>
<div class="t" style="left:1765.20px;top:755px;height:23px;line-height:23px;font-size:17.47px;color:#1f6294;letter-spacing:-0.210px;-webkit-text-stroke:0.4px #1f6294;">Tax Exclusive</div>
<div class="t" style="left:36.50px;top:1056px;height:21px;line-height:21px;font-size:15.6px;color:#222;letter-spacing:0.146px;-webkit-text-stroke:0.3px #222;">Advanced Settings :</div>
<div class="abs" style="left:36px;top:1035px;width:1840px;height:17px;background:linear-gradient(#e4e4e4,#fbfbfb 70%,#fff)"></div>
<div class="abs" style="left:36px;top:791px;width:1840.4px;height:245px;overflow:hidden">
<div class="abs" style="left:0;top:0;width:1900px;height:38px;background:#eeeeee"></div>
<div class="abs" style="left:0;top:205px;width:1900px;height:40px;background:#eeeeee"></div>
<div class="abs" style="left:0;top:0.0px;width:1900px;height:1px;background:#d6d6d6"></div>
<div class="abs" style="left:0;top:38.0px;width:1900px;height:1px;background:#d6d6d6"></div>
<div class="abs" style="left:0;top:144.0px;width:1900px;height:1px;background:#d6d6d6"></div>
<div class="abs" style="left:0;top:205.0px;width:1900px;height:1px;background:#d6d6d6"></div>
<div class="abs" style="left:0;top:244.0px;width:1900px;height:1px;background:#d6d6d6"></div>
<div class="abs" style="left:0.0px;top:0;width:1px;height:245px;background:#d6d6d6"></div>
<div class="abs" style="left:188.0px;top:0;width:1px;height:245px;background:#d6d6d6"></div>
<div class="abs" style="left:375.0px;top:0;width:1px;height:245px;background:#d6d6d6"></div>
<div class="abs" style="left:563.0px;top:0;width:1px;height:245px;background:#d6d6d6"></div>
<div class="abs" style="left:750.0px;top:0;width:1px;height:245px;background:#d6d6d6"></div>
<div class="abs" style="left:938.0px;top:0;width:1px;height:245px;background:#d6d6d6"></div>
<div class="abs" style="left:1125.0px;top:0;width:1px;height:245px;background:#d6d6d6"></div>
<div class="abs" style="left:1313.0px;top:0;width:1px;height:245px;background:#d6d6d6"></div>
<div class="abs" style="left:1500.0px;top:0;width:1px;height:245px;background:#d6d6d6"></div>
<div class="abs" style="left:1688.0px;top:0;width:1px;height:245px;background:#d6d6d6"></div>
<div class="abs" style="left:-36px;top:-791px;width:1920px;height:1080px"><div class="t" style="left:121.00px;top:800px;height:21px;line-height:21px;font-size:15.45px;color:#1f1f1f;letter-spacing:-0.226px;font-weight:bold;">Sr.</div>
<div class="t" style="left:295.70px;top:800px;height:21px;line-height:21px;font-size:15.45px;color:#1f1f1f;letter-spacing:-0.610px;font-weight:bold;">SO No</div>
<div class="t" style="left:488.00px;top:800px;height:21px;line-height:21px;font-size:15.45px;color:#1f1f1f;letter-spacing:1.095px;font-weight:bold;">Item</div>
<div class="t" style="left:649.00px;top:800px;height:21px;line-height:21px;font-size:15.45px;color:#1f1f1f;letter-spacing:0.251px;font-weight:bold;">Description</div>
<div class="t" style="left:842.50px;top:800px;height:21px;line-height:21px;font-size:15.45px;color:#1f1f1f;letter-spacing:0.521px;font-weight:bold;">Item Type</div>
<div class="t" style="left:1034.00px;top:800px;height:21px;line-height:21px;font-size:15.45px;color:#1f1f1f;letter-spacing:-0.388px;font-weight:bold;">HSN/SAC</div>
<div class="t" style="left:1242.00px;top:800px;height:21px;line-height:21px;font-size:15.45px;color:#1f1f1f;letter-spacing:0.426px;font-weight:bold;">Qty</div>
<div class="t" style="left:1397.00px;top:800px;height:21px;line-height:21px;font-size:15.45px;color:#1f1f1f;letter-spacing:0.092px;font-weight:bold;">Qty Allocate</div>
<div class="t" style="left:1551.00px;top:800px;height:21px;line-height:21px;font-size:15.45px;color:#1f1f1f;letter-spacing:0.359px;font-weight:bold;">Unit of Measurement</div>
<div class="t" style="left:1770.00px;top:800px;height:21px;line-height:21px;font-size:15.45px;color:#1f1f1f;letter-spacing:-0.057px;font-weight:bold;">Budget Price</div>
<div class="t" style="left:126.30px;top:872px;height:21px;line-height:21px;font-size:15.6px;color:#333;letter-spacing:0.000px;">1</div>
<div class="t" style="left:237.70px;top:872px;height:21px;line-height:21px;font-size:15.6px;color:#337ab7;letter-spacing:-0.293px;">SO/AB/012</div>
<div class="t" style="left:425.00px;top:861px;height:21px;line-height:21px;font-size:15.6px;color:#337ab7;letter-spacing:0.014px;">Apple Smart Watch</div>
<div class="t" style="left:425.00px;top:883px;height:21px;line-height:21px;font-size:15.6px;color:#337ab7;letter-spacing:-1.024px;">(S&amp;P)</div>
<div class="t" style="left:611.70px;top:872px;height:21px;line-height:21px;font-size:15.6px;color:#333;letter-spacing:0.111px;">Fruit</div>
<div class="t" style="left:800.00px;top:872px;height:21px;line-height:21px;font-size:15.6px;color:#333;letter-spacing:-0.287px;">Goods</div>
<div class="t" style="left:1097.50px;top:872px;height:21px;line-height:21px;font-size:15.6px;color:#333;letter-spacing:-0.073px;">010121</div>
<div class="t" style="left:1306.50px;top:872px;height:21px;line-height:21px;font-size:15.6px;color:#333;letter-spacing:-0.226px;">5.00</div>
<div class="t" style="left:1549.00px;top:872px;height:21px;line-height:21px;font-size:15.6px;color:#333;letter-spacing:0.423px;">Numbers</div>
<div class="t" style="left:1852.00px;top:872px;height:21px;line-height:21px;font-size:15.6px;color:#333;letter-spacing:-0.226px;">0.00</div>
<div class="t" style="left:126.50px;top:956px;height:21px;line-height:21px;font-size:15.6px;color:#333;letter-spacing:0.000px;">2</div>
<div class="t" style="left:237.70px;top:956px;height:21px;line-height:21px;font-size:15.6px;color:#337ab7;letter-spacing:-0.293px;">SO/AB/012</div>
<div class="t" style="left:425.00px;top:956px;height:21px;line-height:21px;font-size:15.6px;color:#337ab7;letter-spacing:-0.822px;">AVG</div>
<div class="t" style="left:800.00px;top:956px;height:21px;line-height:21px;font-size:15.6px;color:#333;letter-spacing:-0.287px;">Goods</div>
<div class="t" style="left:1080.50px;top:956px;height:21px;line-height:21px;font-size:15.6px;color:#333;letter-spacing:-0.079px;">01011010</div>
<div class="t" style="left:1305.50px;top:956px;height:21px;line-height:21px;font-size:15.6px;color:#333;letter-spacing:0.108px;">1.00</div>
<div class="t" style="left:1549.00px;top:956px;height:21px;line-height:21px;font-size:15.6px;color:#333;letter-spacing:0.423px;">Numbers</div>
<div class="t" style="left:1852.00px;top:956px;height:21px;line-height:21px;font-size:15.6px;color:#333;letter-spacing:-0.226px;">0.00</div>
<div class="t" style="left:50.60px;top:1006px;height:21px;line-height:21px;font-size:15.45px;color:#1f1f1f;letter-spacing:0.192px;font-weight:bold;">Total Qty</div>
<div class="t" style="left:1306.00px;top:1006px;height:21px;line-height:21px;font-size:15.45px;color:#1f1f1f;letter-spacing:0.347px;font-weight:bold;">6.00</div>
<div class="t" style="left:1851.50px;top:1006px;height:21px;line-height:21px;font-size:15.45px;color:#1f1f1f;letter-spacing:0.680px;font-weight:bold;">0.00</div></div>
</div>
<div class="abs" style="left:36px;top:1036px;width:694px;height:7.4px;background:#bcbcbc"></div>
<div class="abs" style="left:1676px;top:173px;width:200px;height:400.5px;background:#fff;box-shadow:0 1px 7px rgba(40,60,110,.1)"></div>
<div class="abs" style="left:1676px;top:218px;width:200px;height:2px;background:#d6d6d6"></div>
<div class="abs" style="left:1676px;top:262px;width:200px;height:2px;background:#d6d6d6"></div>
<div class="abs" style="left:1676px;top:307px;width:200px;height:2px;background:#d6d6d6"></div>
<div class="abs" style="left:1676px;top:351px;width:200px;height:2px;background:#d6d6d6"></div>
<div class="abs" style="left:1676px;top:396px;width:200px;height:2px;background:#d6d6d6"></div>
<div class="abs" style="left:1676px;top:440px;width:200px;height:2px;background:#d6d6d6"></div>
<div class="abs" style="left:1676px;top:485px;width:200px;height:2px;background:#d6d6d6"></div>
<div class="abs" style="left:1676px;top:529px;width:200px;height:2px;background:#d6d6d6"></div>
<div class="t" style="left:1690.25px;top:187px;height:20px;line-height:20px;font-size:15.08px;color:#383838;letter-spacing:-0.014px;">Edit</div>
<div class="t" style="left:1691.25px;top:231px;height:20px;line-height:20px;font-size:15.08px;color:#383838;letter-spacing:-0.174px;">Create GRN</div>
<div class="t" style="left:1691.25px;top:276px;height:20px;line-height:20px;font-size:15.08px;color:#383838;letter-spacing:0.125px;">Create Bill</div>
<div class="t" style="left:1690.25px;top:320px;height:20px;line-height:20px;font-size:15.08px;color:#383838;letter-spacing:-0.041px;">Pay Advance</div>
<div class="t" style="left:1691.25px;top:365px;height:20px;line-height:20px;font-size:15.08px;color:#383838;letter-spacing:-0.370px;">Copy</div>
<div class="t" style="left:1691.25px;top:409px;height:20px;line-height:20px;font-size:15.08px;color:#383838;letter-spacing:0.179px;">Create New Version</div>
<div class="t" style="left:1691.25px;top:453px;height:20px;line-height:20px;font-size:15.08px;color:#383838;letter-spacing:-0.061px;">Stop</div>
<div class="t" style="left:1691.25px;top:498px;height:20px;line-height:20px;font-size:15.08px;color:#383838;letter-spacing:0.196px;">Void</div>
<div class="t" style="left:1690.25px;top:542px;height:20px;line-height:20px;font-size:15.08px;color:#383838;letter-spacing:0.310px;">Delete</div>
<div class="abs" style="left:1672px;top:394px;width:208px;height:50px;border:5px solid #ec1c24"></div>
<div class="abs" style="left:1883px;top:231.3px;width:29px;height:192.7px;background:#fdc010;border-radius:7px 0 0 7px"></div>
<div class="abs" style="left:1883px;top:231.3px;width:29px;height:192.7px"><div style="position:absolute;left:15.2px;top:96.8px;transform:translate(-50%,-50%) rotate(-90deg);white-space:nowrap;font-size:15.4px;color:#2b2b2b;letter-spacing:.02px;line-height:20px;-webkit-text-stroke:.5px #2b2b2b">OPTIONS</div></div>
<div class="abs" style="left:13px;top:999.1px;width:68px;height:68px;border-radius:50%;background:rgba(9,120,225,.57)"></div>
<svg class="abs" style="left:31px;top:1017.4px" width="32.6" height="32.6" viewBox="0 0 32.6 32.6" fill="rgba(10,90,190,.2)" stroke="#fff" stroke-width="2.6"><rect x="1.9" y="1.9" width="11.2" height="11.2" rx="1.6"/><rect x="18.6" y="1.9" width="11.2" height="11.2" rx="1.6"/><rect x="1.9" y="18.6" width="11.2" height="11.2" rx="1.6"/><rect x="18.6" y="18.6" width="11.2" height="11.2" rx="1.6"/></svg>
<div class="abs" style="left:1912px;top:0;width:8px;height:1080px;background:#f1f1f1"></div>
<div class="abs" style="left:1912px;top:0;width:8px;height:904px;background:#bcbcbc"></div>
</div>
</body>
</html>
